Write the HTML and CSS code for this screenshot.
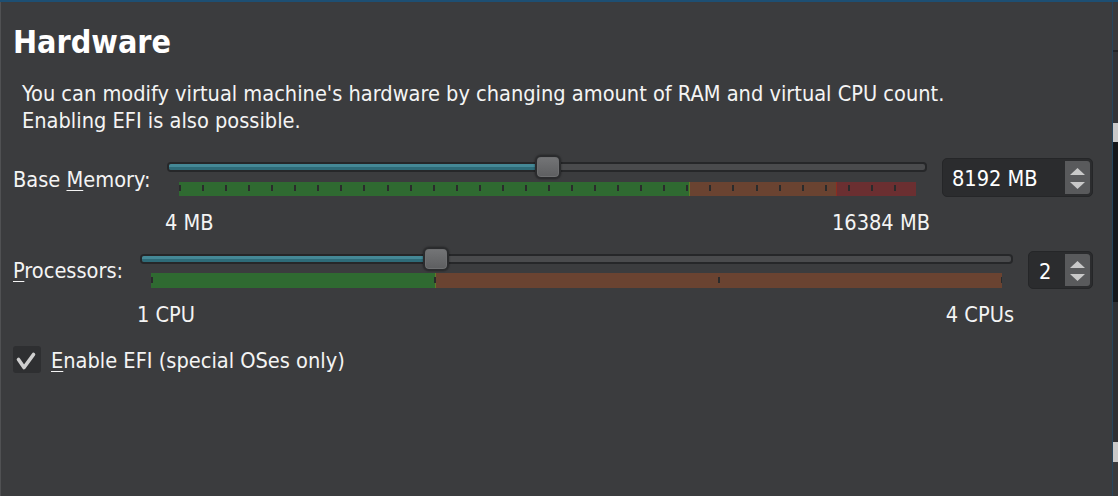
FILE: index.html
```html
<!DOCTYPE html>
<html lang="en">
<head>
<meta charset="utf-8">
<title>Hardware</title>
<link rel="stylesheet" href="styles.css">
</head>
<body>
<div class="window">
  <main class="panel">
    <h1 class="title">Hardware</h1>
    <p class="desc">You can modify virtual machine's hardware by changing amount of RAM and virtual CPU count.<br>Enabling EFI is also possible.</p>

    <div class="row row-mem">
      <label class="row-label">Base <u>M</u>emory:</label>
      <div class="slider-col">
        <div class="slider">
          <div class="track"><div class="fill" style="width:381px"></div></div>
          <div class="handle" style="left:368px"></div>
        </div>
        <div class="scale">
          <div class="zone zone-green" style="width:512px"></div>
          <div class="zone zone-brown" style="width:147px"></div>
          <div class="zone zone-red" style="width:79px"></div>
          <div class="ticks"></div>
        </div>
        <div class="scale-labels"><span>4 MB</span><span>16384 MB</span></div>
      </div>
      <div class="spin">
        <span class="spin-value">8192 MB</span>
        <div class="spin-btns">
          <svg width="25" height="35" viewBox="0 0 25 35"><polygon points="5,15 12.5,8 20,15" fill="#c9c9c9"/><polygon points="5,22 20,22 12.5,29" fill="#c9c9c9"/></svg>
        </div>
      </div>
    </div>

    <div class="row row-cpu">
      <label class="row-label"><u>P</u>rocessors:</label>
      <div class="slider-col">
        <div class="slider">
          <div class="track"><div class="fill" style="width:296px"></div></div>
          <div class="handle" style="left:283px"></div>
        </div>
        <div class="scale">
          <div class="zone zone-green" style="width:285px"></div>
          <div class="zone zone-brown zone-last" style="width:567px"></div>
          <div class="ticks"></div>
        </div>
        <div class="scale-labels"><span>1 CPU</span><span>4 CPUs</span></div>
      </div>
      <div class="spin">
        <span class="spin-value">2</span>
        <div class="spin-btns">
          <svg width="25" height="34" viewBox="0 0 25 34"><polygon points="5,15 12.5,8 20,15" fill="#c9c9c9"/><polygon points="5,21 20,21 12.5,28" fill="#c9c9c9"/></svg>
        </div>
      </div>
    </div>

    <div class="check-row">
      <span class="checkbox">
        <svg width="28" height="27" viewBox="0 0 28 27"><path d="M5.5 13.5 L11 21.5 L20.5 8.5" fill="none" stroke="#cfcfcf" stroke-width="3.6" stroke-linejoin="round" stroke-linecap="round"/></svg>
      </span>
      <span class="check-label"><u>E</u>nable EFI (special OSes only)</span>
    </div>
  </main>
  <div class="edge"></div>
</div>
</body>
</html>
```

FILE: styles.css
```css
html, body {
  margin: 0;
  padding: 0;
  background: #3b3c3e;
}

body {
  font-family: "DejaVu Sans Condensed", "DejaVu Sans", sans-serif;
  font-stretch: semi-condensed;
  font-size: 21.6px;
  line-height: 24px;
  color: #f4f4f4;
}

.window {
  display: flex;
  width: 1118px;
  height: 496px;
  border-top: 2px solid #1d4f73;
  box-sizing: border-box;
  overflow: hidden;
}

.panel {
  width: 1113px;
  flex: none;
  box-sizing: border-box;
  border-left: 1px solid #505153;
  border-right: 1px solid #24465f;
  padding: 21px 19px 0 12px;
  background: #3b3c3e;
}

.edge {
  flex: 1;
  background: linear-gradient(to bottom,
    #3a3b3d 0 48px,
    #232427 48px 50px,
    #333437 50px 121px,
    #c9c9c9 121px 140px,
    #15171a 140px 300px,
    #2f3033 300px 440px,
    #c9c9c9 440px 460px,
    #3a3b3d 460px);
}

.title {
  margin: 0;
  font-size: 32px;
  line-height: 38px;
  font-weight: bold;
  color: #ffffff;
}

.desc {
  margin: 19px 0 0 9px;
  line-height: 27px;
}

.row {
  display: flex;
  align-items: flex-start;
}

.row-mem {
  margin-top: 21px;
}

.row-cpu {
  margin-top: 12px;
}

.row-label {
  flex: none;
  margin-top: 13px;
}

.row-mem .row-label { width: 154px; }
.row-cpu .row-label { width: 127px; margin-top: 12px; }

u {
  text-decoration: underline;
  text-underline-offset: 3px;
  text-decoration-thickness: 1px;
}

.slider-col {
  flex: 1;
  min-width: 0;
}

.slider {
  position: relative;
  height: 24px;
  padding-top: 7px;
  box-sizing: border-box;
}

.track {
  height: 10px;
  box-sizing: border-box;
  border: 2px solid #262729;
  border-radius: 4px;
  background: #4a4b4d;
  overflow: hidden;
}

.fill {
  height: 100%;
  background: linear-gradient(to bottom, #448896 0 50%, #2e6b78 50% 100%);
}

.handle {
  position: absolute;
  top: 0;
  width: 26px;
  height: 24px;
  box-sizing: border-box;
  border: 2px solid #2a2b2d;
  border-radius: 6px;
  background: linear-gradient(to bottom, #747577, #5d5e60);
  box-shadow: inset 0 0 0 1px #6e6f71, 0 0 2px rgba(0,0,0,0.5);
}

.scale {
  position: relative;
  display: flex;
  height: 14px;
  margin: 3px 11px 0 12px;
}

.row-cpu .scale {
  height: 15px;
  margin: 2px 11px 0 11px;
}

.zone { height: 100%; box-sizing: border-box; }
.zone-green { background: #2f6a31; border-right: 1px solid #5f7a25; }
.zone-brown { background: #6a4331; border-right: 1px solid #8b2d20; }
.zone-last { border-right: none; }
.zone-red { background: #6b2f31; }

.ticks {
  position: absolute;
  left: 0;
  right: 0;
  top: 3px;
  height: 6px;
  background: repeating-linear-gradient(to right, #2a2b2c 0 2px, transparent 2px 23.0625px);
}

.row-cpu .ticks {
  top: 4px;
  background: repeating-linear-gradient(to right, #2a2b2c 0 2px, transparent 2px 283.33px);
}

.scale-labels {
  display: flex;
  justify-content: space-between;
  margin: 15px -3px 0 -2px;
}

.row-cpu .scale-labels {
  margin: 15px -1px 0 -3px;
}

.spin {
  flex: none;
  display: flex;
  align-items: center;
  justify-content: space-between;
  margin: 3px 0 0 15px;
  height: 39px;
  box-sizing: border-box;
  border: 1px solid #252628;
  border-radius: 5px;
  background: #2b2c2e;
  padding: 2px 2px 2px 9px;
}

.row-mem .spin { width: 151px; }
.row-cpu .spin { width: 65px; height: 38px; margin-top: 4px; padding-left: 10px; }

.spin-value {
  line-height: 24px;
  margin-top: 3px;
  color: #ffffff;
}

.spin-btns {
  align-self: stretch;
  width: 25px;
  border-radius: 0 3px 3px 0;
  background: #595a5c;
  display: flex;
  align-items: center;
}

.spin-btns svg { display: block; }

.check-row {
  display: flex;
  align-items: center;
  margin-top: 19px;
}

.checkbox {
  width: 28px;
  height: 27px;
  flex: none;
  border-radius: 3px;
  background: #2e2f31;
  margin-right: 10px;
}

.checkbox svg { display: block; }

.check-label {
  margin-top: 3px;
}
```
